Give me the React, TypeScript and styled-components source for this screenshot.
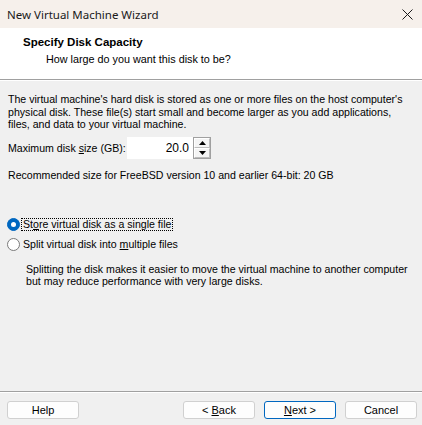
import React from "react";
import styled, { createGlobalStyle } from "styled-components";

const Global = createGlobalStyle`
  html, body { margin: 0; padding: 0; background: #f0f0f0; }
  #root { width: 422px; height: 425px; }
`;

const Window = styled.div`
  width: 422px;
  height: 425px;
  display: flex;
  flex-direction: column;
  background: #f0f0f0;
  font-family: "Liberation Sans", Arial, sans-serif;
  font-size: 11px;
  color: #000;
  overflow: hidden;
`;

const TitleBar = styled.div`
  height: 28px;
  flex: none;
  display: flex;
  align-items: center;
  justify-content: space-between;
  padding: 0 8px 0 7px;
  background: #f6f0eb;
  font-family: "Noto Sans", sans-serif;
  font-size: 11.5px;
  color: #1a1a1a;
`;

const CloseIcon = styled.svg`
  width: 11px;
  height: 11px;
  margin-right: 1px;
`;

const Header = styled.div`
  height: 52px;
  flex: none;
  background: #fff;
  border-bottom: 1px solid #a0a0a0;
  box-shadow: 0 1px 0 #fff;
  padding: 8px 0 0 23px;
  box-sizing: border-box;
`;

const HeaderTitle = styled.div`
  font-weight: bold;
  line-height: 13px;
  font-size: 11.5px;
`;

const HeaderSub = styled.div`
  margin-left: 23px;
  margin-top: 4px;
  line-height: 13px;
  font-size: 10.8px;
`;

const Body = styled.div`
  flex: 1;
  padding: 13px 8px 0 8px;
  display: flex;
  flex-direction: column;
  font-size: 10.6px;
  white-space: nowrap;
`;

const Para = styled.p`
  margin: 0;
  line-height: 12.5px;
`;

const SizeRow = styled.div`
  display: flex;
  align-items: center;
  margin-top: 6px;
  height: 22px;
`;

const Label = styled.span`
  width: 119px;
  flex: none;
`;

const NumberBox = styled.div`
  width: 66px;
  height: 22px;
  background: #fff;
  box-sizing: border-box;
  display: flex;
  align-items: center;
  justify-content: flex-end;
  padding-right: 4px;
  font-size: 12px;
`;

const Spinner = styled.div`
  width: 18px;
  height: 22px;
  box-sizing: border-box;
  border: 1px solid #a0a0a0;
  display: flex;
  flex-direction: column;
  background: #e8e8e8;
`;

const SpinButton = styled.div`
  flex: 1;
  display: flex;
  align-items: center;
  justify-content: center;
  background: #f4f4f4;
  border: 1px solid #fff;
  border-right-color: #bcbcbc;
  border-bottom-color: #bcbcbc;
`;

const Recommended = styled.div`
  margin-top: 10px;
  line-height: 13px;
`;

const RadioGroup = styled.div`
  margin-top: 36px;
  display: flex;
  flex-direction: column;
  gap: 7px;
  margin-left: -1px;
`;

const RadioRow = styled.div`
  display: flex;
  align-items: center;
  height: 13px;
  gap: 1px;
`;

const RadioCircle = styled.span<{ $checked?: boolean }>`
  width: 13px;
  height: 13px;
  box-sizing: border-box;
  border-radius: 50%;
  flex: none;
  background: ${(p) => (p.$checked ? "#0067c0" : "#fff")};
  border: 1px solid ${(p) => (p.$checked ? "#0067c0" : "#7a7a7a")};
  display: flex;
  align-items: center;
  justify-content: center;
  &::after {
    content: "";
    display: ${(p) => (p.$checked ? "block" : "none")};
    width: 5px;
    height: 5px;
    border-radius: 50%;
    background: #fff;
  }
`;

const RadioLabel = styled.span<{ $focus?: boolean }>`
  line-height: 11px;
  padding: 0 1px;
  border: 1px dotted ${(p) => (p.$focus ? "#000" : "transparent")};
`;

const Desc = styled.p`
  margin: 12px 0 0 18px;
  line-height: 12.5px;
`;

const Footer = styled.div`
  flex: none;
  height: 34px;
  border-top: 1px solid #a0a0a0;
  box-shadow: inset 0 1px 0 #fff;
  display: flex;
  align-items: flex-start;
  padding: 9px 5px 0 7px;
  box-sizing: border-box;
`;

const Spacer = styled.div`
  flex: 1;
`;

const Btn = styled.button<{ $default?: boolean }>`
  width: 72px;
  height: 18px;
  box-sizing: border-box;
  background: #fdfdfd;
  border: 1px solid ${(p) => (p.$default ? "#0067c0" : "#d0d0d0")};
  border-radius: 3px;
  font-family: "Liberation Sans", Arial, sans-serif;
  font-size: 11px;
  color: #000;
  padding: 0;
  line-height: 16px;
  & + & {
    margin-left: 9px;
  }
`;

const U = styled.span`
  text-decoration: underline;
`;

export default function App() {
  return (
    <Window>
      <Global />
      <TitleBar>
        <span>New Virtual Machine Wizard</span>
        <CloseIcon viewBox="0 0 11 11">
          <path d="M0.5 0.5 L10.5 10.5 M10.5 0.5 L0.5 10.5" stroke="#1a1a1a" strokeWidth="1" fill="none" />
        </CloseIcon>
      </TitleBar>
      <Header>
        <HeaderTitle>Specify Disk Capacity</HeaderTitle>
        <HeaderSub>How large do you want this disk to be?</HeaderSub>
      </Header>
      <Body>
        <Para>
          The virtual machine's hard disk is stored as one or more files on the host computer's
          <br />
          physical disk. These file(s) start small and become larger as you add applications,
          <br />
          files, and data to your virtual machine.
        </Para>
        <SizeRow>
          <Label>
            Maximum disk <U>s</U>ize (GB):
          </Label>
          <NumberBox>20.0</NumberBox>
          <Spinner>
            <SpinButton>
              <svg width="7" height="4" viewBox="0 0 7 4">
                <path d="M3.5 0 L7 4 L0 4 Z" fill="#000" />
              </svg>
            </SpinButton>
            <SpinButton>
              <svg width="7" height="4" viewBox="0 0 7 4">
                <path d="M0 0 L7 0 L3.5 4 Z" fill="#000" />
              </svg>
            </SpinButton>
          </Spinner>
        </SizeRow>
        <Recommended>Recommended size for FreeBSD version 10 and earlier 64-bit: 20 GB</Recommended>
        <RadioGroup>
          <RadioRow>
            <RadioCircle $checked />
            <RadioLabel $focus>
              St<U>o</U>re virtual disk as a single file
            </RadioLabel>
          </RadioRow>
          <RadioRow>
            <RadioCircle />
            <RadioLabel>
              Split virtual disk into <U>m</U>ultiple files
            </RadioLabel>
          </RadioRow>
        </RadioGroup>
        <Desc>
          Splitting the disk makes it easier to move the virtual machine to another computer
          <br />
          but may reduce performance with very large disks.
        </Desc>
      </Body>
      <Footer>
        <Btn>Help</Btn>
        <Spacer />
        <Btn>
          &lt; <U>B</U>ack
        </Btn>
        <Btn $default>
          <U>N</U>ext &gt;
        </Btn>
        <Btn>Cancel</Btn>
      </Footer>
    </Window>
  );
}
